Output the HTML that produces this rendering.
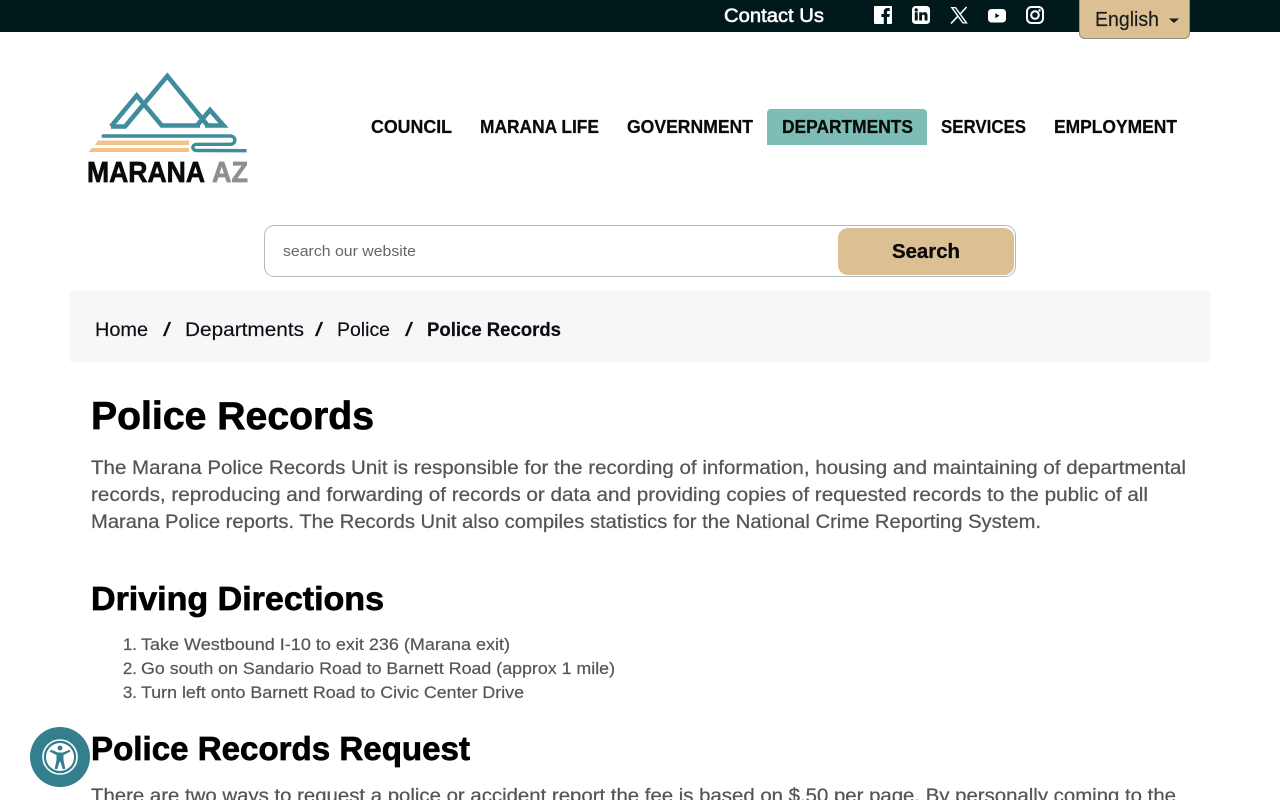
<!DOCTYPE html>
<html lang="en">
<head>
<meta charset="utf-8">
<title>Police Records - Marana AZ</title>
<style>
html,body{margin:0;padding:0;width:1280px;height:800px;overflow:hidden;background:#fff}
svg{display:block}
text{font-family:"Liberation Sans",Arial,sans-serif;white-space:pre}
.b{font-weight:700}
.h{font-weight:700;fill:#000;stroke:#000;stroke-width:.7}
.n{font-weight:700;font-size:18px;fill:#0a0a0a;stroke:#0a0a0a;stroke-width:.25}
.p{font-size:19.5px;fill:#555;stroke:#555;stroke-width:.25}
.l{font-size:17px;fill:#555;stroke:#555;stroke-width:.2}
.c{font-size:19px;fill:#0c0c14;stroke:#0c0c14;stroke-width:.15}
</style>
</head>
<body>
<svg width="1280" height="800" viewBox="0 0 1280 800" xmlns="http://www.w3.org/2000/svg">
<!-- top bar -->
<rect width="1280" height="32" fill="#001a1c"/>
<text x="724" y="22" font-size="19" fill="#fff" stroke="#fff" stroke-width=".55" textLength="100" lengthAdjust="spacingAndGlyphs">Contact Us</text>
<!-- facebook -->
<rect x="874" y="6" width="18" height="18" rx="1" fill="#fff"/>
<path d="M883.800 24v-7h-2.400v-3h2.400v-2.200c0-2.400 1.400-3.800 3.600-3.800h2.400v2.900h-1.500c-1 0-1.300.5-1.300 1.300v1.800h2.800l-.5 3h-2.300v7z" fill="#001a1c"/>
<!-- linkedin -->
<rect x="912" y="6" width="18" height="18" rx="3.500" fill="#fff"/>
<path d="M914.800 12.300h2.900v8.200h-2.900zM916.200 8.300a1.650 1.650 0 1 1 0 3.300 1.650 1.650 0 0 1 0-3.300zM919.200 12.300h2.700v1.100c.5-.8 1.400-1.300 2.600-1.300 2.400 0 3 1.500 3 3.700v4.700h-2.900v-4.200c0-1-.3-1.700-1.200-1.700-1 0-1.400.7-1.400 1.700v4.200h-2.800z" fill="#001a1c"/>
<!-- X -->
<path d="M950.500 7h5.300l12 16.500h-5.300zM953.200 8.300l10.100 13.900h1.800l-10.100-13.900z" fill="#fff" fill-rule="evenodd"/>
<path d="M966.600 7l-6.800 7.400M957.800 16.300L951 23.500" stroke="#fff" stroke-width="1.600" fill="none"/>
<!-- youtube -->
<rect x="988" y="9" width="18" height="13.500" rx="3.500" fill="#fff"/>
<path d="M995.300 13.300v5l4.200-2.500z" fill="#001a1c"/>
<!-- instagram -->
<rect x="1027" y="7" width="16" height="16" rx="4.500" fill="none" stroke="#fff" stroke-width="2"/>
<circle cx="1035" cy="15" r="3.800" fill="none" stroke="#fff" stroke-width="2"/>
<circle cx="1039.500" cy="10.500" r="1.200" fill="#fff"/>
<!-- language -->
<rect x="1079.500" y="-4" width="110" height="42.500" rx="5" fill="#dcbf92" stroke="#96917f"/>
<text x="1095" y="26" font-size="20.500" fill="#1a1a1a" stroke="#1a1a1a" stroke-width=".15" textLength="64" lengthAdjust="spacingAndGlyphs">English</text>
<path d="M1169 18.500h10l-5 4.500z" fill="#1a1a1a"/>

<!-- logo -->
<g fill="none" stroke="#3e8c9c" stroke-width="4.600">
<path d="M111 126.500L136.700 95.500L161.700 125.500H200"/>
<path d="M111 126.500H125L167.300 76L208.500 126.500"/>
<path d="M197 125.500L210 110L223.500 125.500H205"/>
</g>
<path d="M101.700 136H230c6.500 0 6.500 8.300 0 8.300H197c-5.500 0-5.500 6.200 0 6.200L246.700 150.700" fill="none" stroke="#3e8c9c" stroke-width="3.400"/>
<path d="M98 140.500H189V145H95zM91.700 148H189V152H88.300z" fill="#f0c48a"/>
<text x="87" y="182" class="b" font-size="28.500" fill="#0a0a0a" stroke="#0a0a0a" stroke-width=".7" textLength="118" lengthAdjust="spacingAndGlyphs">MARANA</text>
<text x="212" y="182" class="b" font-size="28.500" fill="#8f8f8f" stroke="#8f8f8f" stroke-width=".7" textLength="36" lengthAdjust="spacingAndGlyphs">AZ</text>

<!-- nav -->
<path d="M767 145V113a4 4 0 0 1 4-4H923a4 4 0 0 1 4 4V145z" fill="#7cbdb5"/>
<text x="371" y="133" class="n" textLength="81" lengthAdjust="spacingAndGlyphs">COUNCIL</text>
<text x="480" y="133" class="n" textLength="119" lengthAdjust="spacingAndGlyphs">MARANA LIFE</text>
<text x="627" y="133" class="n" textLength="126" lengthAdjust="spacingAndGlyphs">GOVERNMENT</text>
<text x="782" y="133" class="n" textLength="131" lengthAdjust="spacingAndGlyphs">DEPARTMENTS</text>
<text x="941" y="133" class="n" textLength="85" lengthAdjust="spacingAndGlyphs">SERVICES</text>
<text x="1054" y="133" class="n" textLength="123" lengthAdjust="spacingAndGlyphs">EMPLOYMENT</text>

<!-- search -->
<rect x="264.500" y="225.500" width="751" height="51" rx="10" fill="#fff" stroke="#aebcc2"/>
<text x="283" y="256" font-size="15" fill="#666" textLength="133" lengthAdjust="spacingAndGlyphs">search our website</text>
<rect x="838" y="228" width="176" height="47" rx="10" fill="#dcbf92"/>
<text x="892" y="258" class="b" font-size="20" fill="#0a0a0a" stroke="#0a0a0a" stroke-width=".3" textLength="68" lengthAdjust="spacingAndGlyphs">Search</text>

<!-- breadcrumb -->
<rect x="70" y="291" width="1140" height="71" fill="#f7f7f7"/>
<text x="95" y="336" class="c" textLength="53" lengthAdjust="spacingAndGlyphs">Home</text>
<text x="163" y="336" class="c" textLength="8" lengthAdjust="spacingAndGlyphs">/</text>
<text x="185" y="336" class="c" textLength="119" lengthAdjust="spacingAndGlyphs">Departments</text>
<text x="315" y="336" class="c" textLength="8" lengthAdjust="spacingAndGlyphs">/</text>
<text x="337" y="336" class="c" textLength="53" lengthAdjust="spacingAndGlyphs">Police</text>
<text x="405" y="336" class="c" textLength="8" lengthAdjust="spacingAndGlyphs">/</text>
<text x="427" y="336" class="b" font-size="19" fill="#0c0c14" stroke="#0c0c14" stroke-width=".2" textLength="134" lengthAdjust="spacingAndGlyphs">Police Records</text>

<!-- content -->
<text x="91" y="429" class="h" font-size="39" textLength="283" lengthAdjust="spacingAndGlyphs">Police Records</text>
<text x="91" y="474" class="p" textLength="1095" lengthAdjust="spacingAndGlyphs">The Marana Police Records Unit is responsible for the recording of information, housing and maintaining of departmental</text>
<text x="91" y="501" class="p" textLength="1057" lengthAdjust="spacingAndGlyphs">records, reproducing and forwarding of records or data and providing copies of requested records to the public of all</text>
<text x="91" y="528" class="p" textLength="950" lengthAdjust="spacingAndGlyphs">Marana Police reports. The Records Unit also compiles statistics for the National Crime Reporting System.</text>

<text x="91" y="610" class="h" font-size="33.500" textLength="293" lengthAdjust="spacingAndGlyphs">Driving Directions</text>
<text x="137" y="650" class="l" text-anchor="end">1.</text>
<text x="141" y="650" class="l" textLength="369" lengthAdjust="spacingAndGlyphs">Take Westbound I-10 to exit 236 (Marana exit)</text>
<text x="137" y="674" class="l" text-anchor="end">2.</text>
<text x="141" y="674" class="l" textLength="474" lengthAdjust="spacingAndGlyphs">Go south on Sandario Road to Barnett Road (approx 1 mile)</text>
<text x="137" y="698" class="l" text-anchor="end">3.</text>
<text x="141" y="698" class="l" textLength="383" lengthAdjust="spacingAndGlyphs">Turn left onto Barnett Road to Civic Center Drive</text>

<text x="91" y="760" class="h" font-size="33.500" textLength="379" lengthAdjust="spacingAndGlyphs">Police Records Request</text>
<text x="91" y="802" class="p" textLength="1085" lengthAdjust="spacingAndGlyphs">There are two ways to request a police or accident report the fee is based on $.50 per page. By personally coming to the</text>

<!-- accessibility -->
<circle cx="60" cy="757" r="30" fill="#337f8d"/>
<circle cx="60" cy="757" r="17" fill="none" stroke="#fff" stroke-width="1.600"/>
<circle cx="60" cy="757" r="14" fill="#fff"/>
<circle cx="60" cy="748" r="2.500" fill="#337f8d"/>
<path d="M49.500 751.500l7 3.500v5l-1.800 9h2.600l2.200-7h1l2.200 7h2.600l-1.800-9v-5l7-3.500-.9-1.800-6.600 2.800h-5.200l-6.600-2.800z" fill="#337f8d"/>
</svg>
</body>
</html>
